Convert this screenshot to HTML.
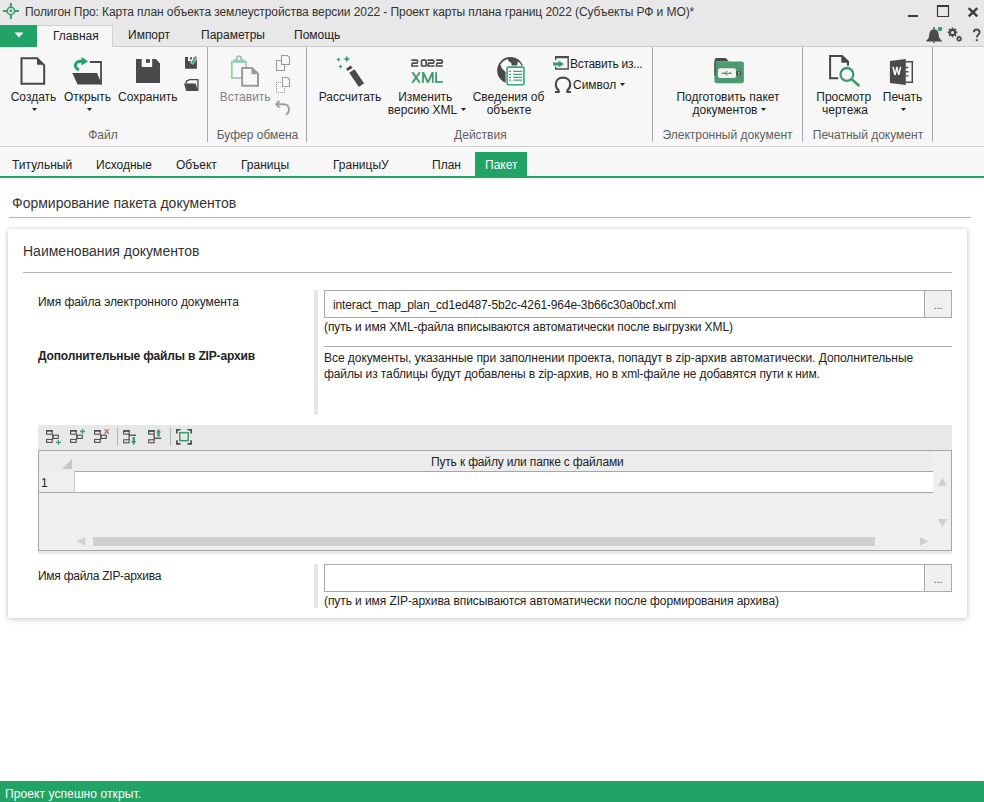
<!DOCTYPE html>
<html><head><meta charset="utf-8">
<style>
*{margin:0;padding:0;box-sizing:border-box}
html,body{width:984px;height:802px;overflow:hidden;background:#fff;font-family:"Liberation Sans",sans-serif;font-size:12px;color:#222}
.a{position:absolute}
.t{position:absolute;white-space:nowrap;line-height:14px}
.c{position:absolute;white-space:nowrap;line-height:14px;text-align:center;width:200px}
.gl{color:#606060}
</style></head><body>

<!-- backgrounds -->
<div class="a" style="left:0;top:0;width:984px;height:46px;background:#e8e8e8"></div>
<div class="a" style="left:0;top:46px;width:984px;height:1px;background:#cbcbcb"></div>
<div class="a" style="left:0;top:47px;width:984px;height:99px;background:#f7f7f7"></div>
<div class="a" style="left:0;top:146px;width:984px;height:1px;background:#d2d2d2"></div>
<div class="a" style="left:0;top:147px;width:984px;height:29px;background:#f7f7f7"></div>
<div class="a" style="left:0;top:176px;width:984px;height:2px;background:#21a366"></div>

<!-- ribbon tabs -->
<div class="a" style="left:0;top:25px;width:37px;height:22px;background:#21a366"></div>
<div class="a" style="left:37px;top:25px;width:76px;height:22px;background:#f7f7f7;border-top:1px solid #d0d0d0;border-right:1px solid #d0d0d0"></div>

<!-- separators -->
<div class="a" style="left:207px;top:47px;width:1px;height:95px;background:#a6a9af"></div>
<div class="a" style="left:306px;top:47px;width:1px;height:95px;background:#a6a9af"></div>
<div class="a" style="left:652px;top:47px;width:1px;height:95px;background:#a6a9af"></div>
<div class="a" style="left:802px;top:47px;width:1px;height:95px;background:#a6a9af"></div>
<div class="a" style="left:932px;top:47px;width:1px;height:95px;background:#a6a9af"></div>

<!-- title & tab texts -->
<div class="t" style="left:25px;top:5px;color:#333;letter-spacing:-0.08px">Полигон Про: Карта план объекта землеустройства версии 2022 - Проект карты плана границ 2022 (Субъекты РФ и МО)*</div>
<div class="t" style="left:53px;top:29px;color:#222">Главная</div>
<div class="t" style="left:128px;top:28px;color:#222">Импорт</div>
<div class="t" style="left:201px;top:28px;color:#222">Параметры</div>
<div class="t" style="left:294px;top:28px;color:#222">Помощь</div>

<!-- ribbon labels -->
<div class="c" style="left:-66.5px;top:90px">Создать</div>
<div class="c" style="left:-12.5px;top:90px">Открыть</div>
<div class="c" style="left:47.8px;top:90px">Сохранить</div>
<div class="c gl" style="left:3px;top:128px">Файл</div>
<div class="c" style="left:145.2px;top:90px;color:#858585">Вставить</div>
<div class="c gl" style="left:157.5px;top:128px">Буфер обмена</div>
<div class="c" style="left:250px;top:90px">Рассчитать</div>
<div class="c" style="left:325.3px;top:90px">Изменить</div>
<div class="c" style="left:322.5px;top:103px">версию XML</div>
<div class="c" style="left:408.5px;top:90px">Сведения об</div>
<div class="c" style="left:409px;top:103px">объекте</div>
<div class="t" style="left:570px;top:57px;letter-spacing:-0.3px">Вставить из...</div>
<div class="t" style="left:573px;top:78px">Символ</div>
<div class="c gl" style="left:380.4px;top:128px">Действия</div>
<div class="c" style="left:628px;top:90px">Подготовить пакет</div>
<div class="c" style="left:625px;top:103px">документов</div>
<div class="c gl" style="left:627.5px;top:128px">Электронный документ</div>
<div class="c" style="left:743.7px;top:90px">Просмотр</div>
<div class="c" style="left:745px;top:103px">чертежа</div>
<div class="c" style="left:802.5px;top:90px">Печать</div>
<div class="c gl" style="left:768px;top:128px">Печатный документ</div>

<!-- doc tabs -->
<div class="t" style="left:12px;top:158px">Титульный</div>
<div class="t" style="left:96px;top:158px">Исходные</div>
<div class="t" style="left:176px;top:158px">Объект</div>
<div class="t" style="left:241px;top:158px">Границы</div>
<div class="t" style="left:333px;top:158px">ГраницыУ</div>
<div class="t" style="left:432px;top:158px">План</div>
<div class="a" style="left:475px;top:152px;width:52px;height:25px;background:#21a366"></div>
<div class="t" style="left:485px;top:158px;color:#fff">Пакет</div>

<!-- content -->
<div class="t" style="left:12px;top:195px;font-size:14px;line-height:16px;color:#333">Формирование пакета документов</div>
<div class="a" style="left:9px;top:217px;width:962px;height:1px;background:#b4b6bc"></div>

<div class="a" style="left:8px;top:229px;width:959px;height:389px;background:#fff;border-radius:2px;box-shadow:0 0 4px rgba(0,0,0,0.16),0 2px 6px rgba(0,0,0,0.12)"></div>
<div class="t" style="left:23px;top:243px;font-size:14px;line-height:16px;color:#333">Наименования документов</div>
<div class="a" style="left:23px;top:272px;width:929px;height:1px;background:#b4b6bc"></div>

<div class="t" style="left:38px;top:295px;color:#222;letter-spacing:-0.08px">Имя файла электронного документа</div>
<div class="a" style="left:314px;top:290px;width:4px;height:125px;background:#e6e6e6"></div>
<div class="a" style="left:324px;top:290px;width:601px;height:28px;border:1px solid #a8aab0;border-right:none;background:#fff"></div>
<div class="t" style="left:333px;top:298px;letter-spacing:-0.135px">interact_map_plan_cd1ed487-5b2c-4261-964e-3b66c30a0bcf.xml</div>
<div class="a" style="left:924px;top:290px;width:28px;height:28px;border:1px solid #a8aab0;background:#eef1ef"></div>
<div class="t" style="left:934px;top:299px;font-size:10px;color:#444">...</div>
<div class="t" style="left:324px;top:320px;letter-spacing:-0.104px">(путь и имя XML-файла вписываются автоматически после выгрузки XML)</div>
<div class="a" style="left:324px;top:346px;width:628px;height:1px;background:#a8aab0"></div>

<div class="t" style="left:38px;top:349px;font-weight:bold;letter-spacing:-0.16px">Дополнительные файлы в ZIP-архив</div>
<div class="t" style="left:324px;top:350px;line-height:16px;letter-spacing:-0.04px">Все документы, указанные при заполнении проекта, попадут в zip-архив автоматически. Дополнительные</div>
<div class="t" style="left:324px;top:366px;line-height:16px;letter-spacing:-0.1px">файлы из таблицы будут добавлены в zip-архив, но в xml-файле не добавятся пути к ним.</div>

<!-- grid -->
<div class="a" style="left:38px;top:425px;width:914px;height:129px;background:#e8e8e8"></div>
<div class="a" style="left:38px;top:450px;width:914px;height:101px;background:#efefef;border:1px solid #a4a6ac"></div>
<div class="a" style="left:39px;top:451px;width:894px;height:20px;background:#ececec"></div>
<div class="a" style="left:74px;top:471px;width:859px;height:22px;background:#fff;border-top:1px solid #a4a6ac;border-bottom:1px solid #a4a6ac"></div>
<div class="a" style="left:39px;top:492px;width:36px;height:1px;background:#a4a6ac"></div>
<div class="a" style="left:74px;top:471px;width:1px;height:22px;background:#c8c8c8"></div>
<div class="t" style="left:431px;top:455px;letter-spacing:-0.166px">Путь к файлу или папке с файлами</div>
<div class="t" style="left:41px;top:476px">1</div>
<div class="a" style="left:93px;top:537px;width:782px;height:9px;background:#d0d0d0"></div>

<!-- zip -->
<div class="t" style="left:38px;top:569px;letter-spacing:-0.27px">Имя файла ZIP-архива</div>
<div class="a" style="left:314px;top:564px;width:4px;height:44px;background:#e6e6e6"></div>
<div class="a" style="left:324px;top:564px;width:601px;height:28px;border:1px solid #a8aab0;border-right:none;background:#fff"></div>
<div class="a" style="left:924px;top:564px;width:28px;height:28px;border:1px solid #a8aab0;background:#eef1ef"></div>
<div class="t" style="left:934px;top:573px;font-size:10px;color:#444">...</div>
<div class="t" style="left:324px;top:594px;letter-spacing:-0.078px">(путь и имя ZIP-архива вписываются автоматически после формирования архива)</div>

<!-- status -->
<div class="a" style="left:0;top:781px;width:984px;height:21px;background:#21a366"></div>
<div class="t" style="left:5px;top:787px;color:#fff;letter-spacing:0.09px">Проект успешно открыт.</div>

<!-- ICONS overlay -->
<svg class="a" style="left:0;top:0" width="984" height="802" viewBox="0 0 984 802">
<!-- title icon -->
<g stroke="#3d9a6c" fill="none">
 <circle cx="10.9" cy="10.9" r="3.7" stroke-width="1.6"/>
 <path d="M10.9 3V7M10.9 14.8V19M3 10.9H7M14.8 10.9H19" stroke-width="2"/>
</g>
<circle cx="10.9" cy="10.9" r="1.4" fill="#3d9a6c"/>
<!-- window controls -->
<rect x="908" y="15" width="10" height="2" fill="#3a3a3a"/>
<path d="M937.5 6H948.5V16.5H937.5Z" fill="none" stroke="#3a3a3a" stroke-width="1.2"/>
<rect x="937" y="5" width="12" height="2" fill="#3a3a3a"/>
<path d="M968.7 8.2L977.3 16.3M977.3 8.2L968.7 16.3" stroke="#3a3a3a" stroke-width="2.3"/>
<!-- ribbon tab arrow -->
<path d="M14.5 32.5H23.5L19 37.5Z" fill="#fff"/>
<!-- bell gear help -->
<path d="M934 29.3C930.2 29.3 929.5 32.5 929.2 35.5C929 38 928 39.3 926.3 40.5V41.6H941.8V40.5C940 39.3 939 38 938.8 35.5C938.5 32.5 937.8 29.3 934 29.3Z" fill="#4a4a4a"/>
<rect x="933.2" y="27.3" width="1.6" height="2" fill="#4a4a4a"/>
<rect x="933" y="41.8" width="2" height="1" fill="#4a4a4a"/>
<circle cx="940" cy="29" r="2.3" fill="#3d9a6c"/>
<path fill-rule="evenodd" fill="#4a4a4a" d="M957.43 31.54L957.43 33.26L956.10 33.26L955.65 34.33L956.59 35.28L955.38 36.49L954.43 35.55L953.36 36.00L953.36 37.33L951.64 37.33L951.64 36.00L950.57 35.55L949.62 36.49L948.41 35.28L949.35 34.33L948.90 33.26L947.57 33.26L947.57 31.54L948.90 31.54L949.35 30.47L948.41 29.52L949.62 28.31L950.57 29.25L951.64 28.80L951.64 27.47L953.36 27.47L953.36 28.80L954.43 29.25L955.38 28.31L956.59 29.52L955.65 30.47L956.10 31.54ZM954.00 32.40A1.5 1.5 0 1 0 951.00 32.40A1.5 1.5 0 1 0 954.00 32.40ZM962.15 38.27L962.15 39.33L961.34 39.34L961.06 40.00L961.64 40.58L960.88 41.34L960.30 40.76L959.64 41.04L959.63 41.85L958.57 41.85L958.56 41.04L957.90 40.76L957.32 41.34L956.56 40.58L957.14 40.00L956.86 39.34L956.05 39.33L956.05 38.27L956.86 38.26L957.14 37.60L956.56 37.02L957.32 36.26L957.90 36.84L958.56 36.56L958.57 35.75L959.63 35.75L959.64 36.56L960.30 36.84L960.88 36.26L961.64 37.02L961.06 37.60L961.34 38.26ZM960.00 38.80A0.9 0.9 0 1 0 958.20 38.80A0.9 0.9 0 1 0 960.00 38.80Z"/>
<path d="M973.8 32.3C973.8 30.4 975 29.5 976.6 29.5C978.3 29.5 979.6 30.5 979.6 32.2C979.6 34.5 976.8 34.8 976.8 37.4" fill="none" stroke="#4a4a4a" stroke-width="1.9"/>
<rect x="975.8" y="39.2" width="2" height="1.9" fill="#4a4a4a"/>

<!-- Создать -->
<path d="M21.5 58.2H37L44.2 65.3V83.8H21.5Z" fill="none" stroke="#474747" stroke-width="2"/>
<path d="M37 57.5V64.8H44.8Z" fill="#474747"/>
<path d="M32 108H37L34.5 111Z" fill="#222"/>
<!-- Открыть -->
<path d="M90 62H101V84.5" fill="none" stroke="#474747" stroke-width="1.8"/>
<path d="M72.3 73.1H97L101.9 84.5H77.6Z" fill="#474747"/>
<path d="M79 69.5C76.5 69 75.2 67 75.5 65C76 62.5 78 61.3 81 61.3H83.5" fill="none" stroke="#1fa463" stroke-width="3"/>
<path d="M81.5 57L88 61.3L81.5 65.6Z" fill="#1fa463"/>
<path d="M87 108H92L89.5 111Z" fill="#222"/>
<!-- Сохранить -->
<path d="M136 59H141.7V67.1H152.2V59H156L160 63.5V83H136Z" fill="#4a4a4a"/>
<rect x="146" y="59.2" width="3.9" height="3.6" fill="#4a4a4a"/>
<path d="M185 57.1H188V61H193V57.1H196.9V68.8H185Z" fill="#4a4a4a"/>
<rect x="190" y="57.4" width="2" height="2" fill="#4a4a4a"/>
<path d="M191.5 63.8L196.5 56.2" stroke="#f7f7f7" stroke-width="3.6"/>
<path d="M191.8 63.6L196.2 56.6" stroke="#4fa57a" stroke-width="2.3"/>
<path d="M186.2 83.4V81.2L189.6 79.6H197.9V90.9" fill="#f7f7f7" stroke="#4a4a4a" stroke-width="1.3"/>
<path d="M184 83.6H195.6L198 90.9H186.2Z" fill="#4a4a4a"/>

<!-- Буфер обмена -->
<rect x="231.8" y="61.8" width="14.2" height="16.2" fill="none" stroke="#9ecaaf" stroke-width="1.8"/>
<path d="M233.3 59.3H244.6V62.5H233.3Z" fill="#9ecaaf"/>
<circle cx="238.9" cy="58.5" r="3.2" fill="#9ecaaf"/>
<circle cx="238.9" cy="58.6" r="1.4" fill="#f7f7f7"/>
<path d="M242.1 68H252L258 73.7V85.7H242.1Z" fill="#f7f7f7" stroke="#9a9a9a" stroke-width="2"/>
<path d="M251.5 67V74.2H259Z" fill="#9a9a9a"/>
<path d="M276 82h1v1h-1zM276 92h1v1h-1zM278 82h1v1h-1zM278 92h1v1h-1zM280 82h1v1h-1zM280 92h1v1h-1zM282 82h1v1h-1zM282 92h1v1h-1zM284 82h1v1h-1zM284 92h1v1h-1zM276 84h1v1h-1zM284 84h1v1h-1zM276 86h1v1h-1zM284 86h1v1h-1zM276 88h1v1h-1zM284 88h1v1h-1zM276 90h1v1h-1zM284 90h1v1h-1z" fill="#9c9c9c"/>
<g fill="none" stroke="#9c9c9c" stroke-width="1.1">
 <path d="M276.5 60.5H284.5V70.5H276.5Z"/>
 <path d="M281.5 55.5H287.5L289.5 57.5V64.5H281.5Z" fill="#f7f7f7"/>
 <path d="M282.5 77.5H287.5L289.5 79.5V86.5H282.5Z" fill="#f7f7f7"/>
</g>

<path d="M279.5 101L276.2 104.3L279.5 107.6" fill="none" stroke="#a0a0a0" stroke-width="1.9"/>
<path d="M276.5 104.3H283C286.8 104.3 289 106.5 289 109.5C289 112 288 113.5 286 114.8" fill="none" stroke="#a0a0a0" stroke-width="1.9"/>

<!-- Рассчитать wand -->
<path d="M349.2 72.7L354.5 69.3L364 83.3L358.9 87ZM346 68.7L350.7 65.4L352.6 67.7L347.7 70.9Z" fill="#4a4a4a"/>
<path d="M346.8 55.4L347.8 58.0L350.40000000000003 59L347.8 60.0L346.8 62.6L345.8 60.0L343.2 59L345.8 58.0ZM338.5 57.2L339.2 58.8L340.8 59.5L339.2 60.2L338.5 61.8L337.8 60.2L336.2 59.5L337.8 58.8ZM340.5 64.2L341.2 65.8L342.8 66.5L341.2 67.2L340.5 68.8L339.8 67.2L338.2 66.5L339.8 65.8Z" fill="#3d9a6c"/>
<!-- 2022 XML -->
<g fill="none" stroke="#4a4a4a" stroke-width="1.6">
 <path d="M411.4 60.1H416.6Q417.6 60.1 417.6 61.1V62.2Q417.6 63.1 416.6 63.1H412.9Q411.9 63.1 411.9 64.1V66H418.4"/>
 <path d="M422.3 60.1H425.3Q426.1 60.1 426.1 60.9V65.2Q426.1 66 425.3 66H422.3Q421.5 66 421.5 65.2V60.9Q421.5 60.1 422.3 60.1Z"/>
 <path d="M427.6 60.1H432.8Q433.8 60.1 433.8 61.1V62.2Q433.8 63.1 432.8 63.1H429.1Q428.1 63.1 428.1 64.1V66H434.6"/>
 <path d="M436.1 60.1H441.3Q442.3 60.1 442.3 61.1V62.2Q442.3 63.1 441.3 63.1H437.6Q436.6 63.1 436.6 64.1V66H442.9"/>
</g>
<g fill="#3e9a6b">
 <path d="M411.3 72.2H413.6L420.9 82.8H418.6Z"/>
 <path d="M418.6 72.2H420.9L413.6 82.8H411.3Z"/>
 <rect x="422.1" y="72.2" width="1.8" height="10.6"/>
 <rect x="431.9" y="72.2" width="1.8" height="10.6"/>
 <path d="M422.1 72.2H424.2L427.9 80.3L431.6 72.2H433.7L428.9 82.8H426.9Z"/>
 <rect x="435.2" y="72.2" width="1.8" height="10.6"/>
 <rect x="435.2" y="81.1" width="7.7" height="1.7"/>
</g>
<path d="M461 108H466L463.5 111Z" fill="#222"/>

<!-- Сведения об объекте globe -->
<circle cx="510.5" cy="70.4" r="13.3" fill="#4a4a4a"/>
<path d="M500.3 64.5L503.5 61L507.5 59L509 61.5L511 62.5L511.5 64L512 66.3H506.3V72.5L505 71.5L502 68.5Z" fill="#f7f7f7"/>
<path d="M517.5 61.5L520 63L521.5 65.5L518.5 66.3H517L517.5 64Z" fill="#f7f7f7"/>
<rect x="505.6" y="65.6" width="19.8" height="20.7" rx="2" fill="#f7f7f7"/>
<rect x="507.1" y="67.1" width="16.8" height="17.7" rx="1.2" fill="#fff" stroke="#38a67c" stroke-width="1.6"/>
<g stroke="#38a67c" stroke-width="1.3">
 <path d="M509 71.4H511M513.1 71.4H522.2M509 74.3H511M513.1 74.3H522.2M509 77.3H511M513.1 77.3H522.2M509 80.1H511M513.1 80.1H522.2"/>
</g>
<!-- Вставить из -->
<path d="M555.7 60V56.7H568.2V69H555.7V66.5" fill="none" stroke="#4a4a4a" stroke-width="1.4"/>
<rect x="555" y="56" width="14" height="2.2" fill="#4a4a4a"/>
<path d="M553 62.4H558.5V60.5L564 64L558.5 67.4V65.6H553Z" fill="#3d9a6c"/>
<!-- Omega -->
<path d="M558.6 92V90.3C556.6 88.8 555.8 86.6 555.8 84.3C555.8 80.2 558.6 77.6 563 77.6C567.4 77.6 570.2 80.2 570.2 84.3C570.2 86.6 569.4 88.8 567.4 90.3V92" fill="none" stroke="#4a4a4a" stroke-width="2.1"/>
<path d="M555 92H559.6M566.4 92H571" stroke="#4a4a4a" stroke-width="2"/>
<path d="M620 83H625L622.5 86Z" fill="#222"/>

<!-- Подготовить пакет -->
<path d="M714.7 75.4V60C714.7 58.8 715.3 58.1 716.5 58.1H725.8L729 61.5H716Z" fill="#4a4a4a"/>
<rect x="714.4" y="61.4" width="29.5" height="21.9" rx="2.2" fill="#4e9a70"/>
<rect x="714.4" y="61.4" width="1.3" height="14" fill="#4a4a4a"/>
<rect x="718" y="68.3" width="18" height="9.7" rx="2" fill="#f0f0f0"/>
<rect x="736.3" y="71.3" width="4.5" height="4.1" fill="#4a4a4a"/>
<rect x="738.3" y="72" width="1.2" height="1" fill="#eee"/>
<rect x="738.3" y="73.8" width="1.2" height="1" fill="#eee"/>
<g fill="none" stroke="#555" stroke-width="0.8">
 <path d="M722.5 73.3H730.5M724.5 73.3L726.2 71.6H727.5M725.3 73.3L726.8 75H727.6"/>
</g>
<path d="M721.8 72.3V74.3L723.2 73.3Z" fill="#555"/>
<path d="M730 72.3L731.8 73.3L730 74.3Z" fill="#555"/>
<path d="M761 108H766L763.5 111Z" fill="#222"/>

<!-- Просмотр чертежа -->
<path d="M838.3 78.2H830.1V55.9H842.1L848 61.7V65.8" fill="none" stroke="#474747" stroke-width="2"/>
<path d="M841.3 55.2V62.7H849.2Z" fill="#474747"/>
<circle cx="846.9" cy="74.4" r="6.4" fill="#f7f7f7" stroke="#3d9a6c" stroke-width="2.3"/>
<path d="M851.8 79.3L859.3 86" stroke="#3d9a6c" stroke-width="2.6"/>
<!-- Печать word -->
<path d="M905.8 61.7H912.3V82.3H905.8" fill="none" stroke="#4a4a4a" stroke-width="1.5"/>
<path d="M905.8 67.5H908.4M905.8 71.8H908.4M905.8 75.9H908.4" stroke="#4a4a4a" stroke-width="1.4"/>
<path d="M889.9 61L905.8 58.9V85.1L889.9 83Z" fill="#4a4a4a"/>
<path d="M892.2 66.8H893.8L895.1 72L896.2 66.8H897.6L898.7 72L899.9 66.8H901.3L899.5 74.9H898L896.9 70.2L895.8 74.9H894.2Z" fill="#fff"/>
<path d="M901 108H906L903.5 111Z" fill="#222"/>

<!-- grid scroll arrows & header triangle -->
<path d="M72 459V469H62Z" fill="#c6c6c6"/>
<path d="M942.5 477.4L947 485.7H938Z" fill="#cfcfcf"/>
<path d="M938 518.9H947L942.5 527.6Z" fill="#cfcfcf"/>
<path d="M85.3 537V545.6L76.3 541.3Z" fill="#cfcfcf"/>
<path d="M920 537.3V545.5L928.6 541.4Z" fill="#cfcfcf"/>

<!-- grid toolbar icons -->
<g fill="none" stroke="#4a4a4a" stroke-width="1.05">
 <rect x="46.6" y="430.6" width="5.6" height="3.6"/><rect x="53.1" y="435.2" width="5.2" height="3.2"/><rect x="46.6" y="439.4" width="5.6" height="3"/>
 <rect x="70.6" y="430.6" width="5.6" height="3.6"/><rect x="77.1" y="435.2" width="5.2" height="3.2"/><rect x="70.6" y="439.4" width="5.6" height="3"/>
 <rect x="94.6" y="430.6" width="5.6" height="3.6"/><rect x="101.1" y="435.2" width="5.2" height="3.2"/><rect x="94.6" y="439.4" width="5.6" height="3"/>
 <rect x="123.7" y="430.8" width="5.4" height="3.3"/><rect x="123.7" y="439.8" width="5.4" height="3"/>
 <rect x="148.7" y="430.8" width="5.4" height="3.3"/><rect x="148.7" y="439.8" width="5.4" height="3"/>
</g>
<g fill="#474747">
 <rect x="46" y="430" width="6.8" height="1.6"/><rect x="70" y="430" width="6.8" height="1.6"/><rect x="94" y="430" width="6.8" height="1.6"/>
 <rect x="123.1" y="430.2" width="6.6" height="1.6"/><rect x="148.1" y="430.2" width="6.6" height="1.6"/>
 <rect x="52.2" y="434" width="1" height="6"/><rect x="76.2" y="434" width="1" height="6"/><rect x="100.2" y="434" width="1" height="6"/>
 <rect x="129.1" y="434.6" width="7" height="1.3"/><rect x="128.5" y="434" width="1.2" height="6"/>
 <rect x="154.1" y="437.6" width="7" height="1.3"/><rect x="153.5" y="434" width="1.2" height="6"/>
</g>
<g stroke="#3d9a6c" stroke-width="1.3">
 <path d="M55.9 442.3H60.9M58.4 439.8V444.8"/>
 <path d="M80 431.5H85M82.5 429V434"/>
</g>
<path d="M104.6 429.4L108.8 433.6M108.8 429.4L104.6 433.6" stroke="#c0603c" stroke-width="1.3"/>
<rect x="117" y="428" width="1" height="17.5" fill="#b0b6bd"/>
<rect x="170" y="428" width="1" height="17.5" fill="#b0b6bd"/>
<rect x="132.5" y="437" width="2.4" height="4.5" fill="#3d9a6c"/><path d="M131.2 441H136.2L133.7 445.2Z" fill="#3d9a6c"/>
<rect x="157.3" y="432" width="2.4" height="4.6" fill="#3d9a6c"/><path d="M156 432.6H161L158.5 428.7Z" fill="#3d9a6c"/>
<path d="M180.5 429.8H176.9V433.4M187.5 429.8H191.1V433.4M176.9 440.3V443.9H180.5M191.1 440.3V443.9H187.5" fill="none" stroke="#474747" stroke-width="1.6"/>
<rect x="179.8" y="432.7" width="8.4" height="8" fill="none" stroke="#3d9a6c" stroke-width="1.5"/>
</svg>

</body></html>
